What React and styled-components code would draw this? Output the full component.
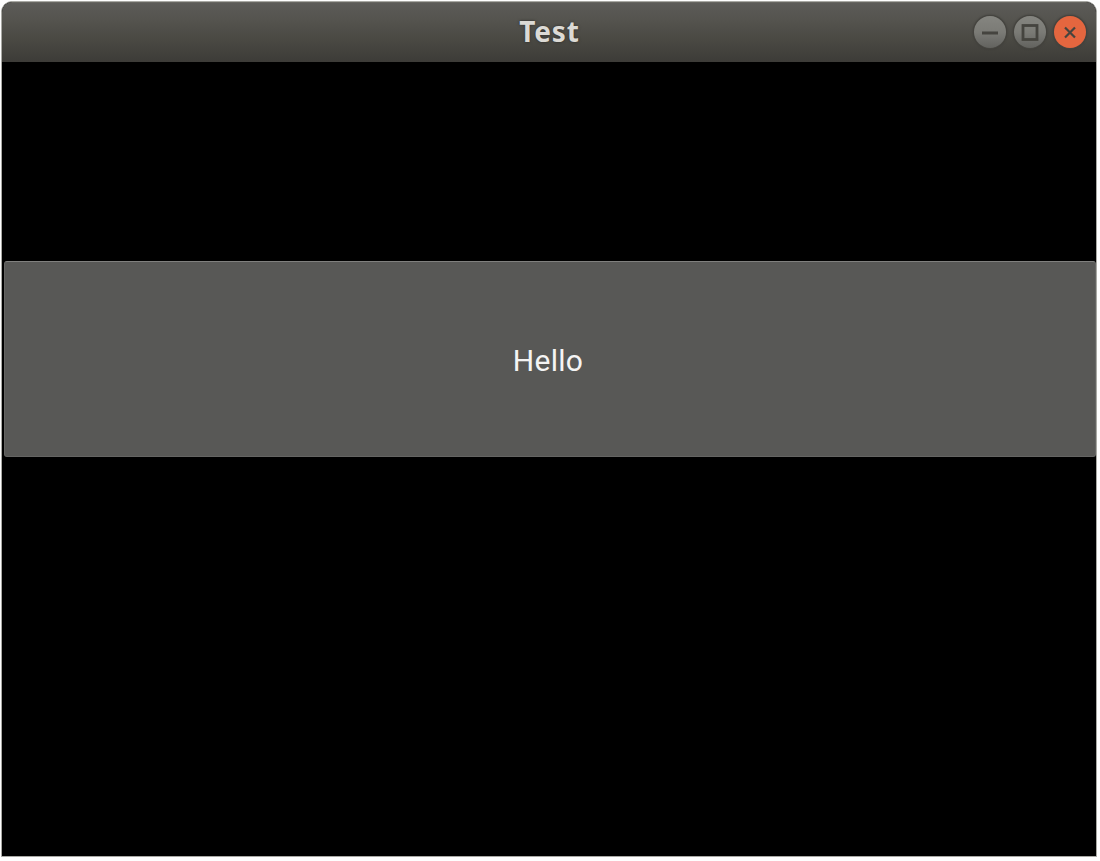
import React from "react";
import styled, { createGlobalStyle } from "styled-components";

const GlobalStyle = createGlobalStyle`
  * { box-sizing: border-box; }
  body { margin: 0; background: #fff; overflow: hidden; }
`;

const Desktop = styled.div`
  width: 1100px;
  height: 861px;
  padding: 1px 3px 4px 1px;
  background: #fefefe;
`;

const Window = styled.main`
  height: 856px;
  display: flex;
  flex-direction: column;
  border: 1px solid #a9a9a4;
  border-radius: 11px 11px 0 0;
  overflow: hidden;
  background: #000;
`;

const TitleBar = styled.header`
  flex: 0 0 60px;
  display: grid;
  grid-template-columns: 1fr auto 1fr;
  align-items: center;
  padding: 0 10px 2px 0;
  background: linear-gradient(#5c5b58 0, #55544f 16px, #494842 38px, #3c3b37 60px);
  border-top: 1px solid #666560;
`;

const Title = styled.h1`
  grid-column: 2;
  margin: 0 0 2px 11px;
  font: 700 28px/40px "Noto Sans", sans-serif;
  letter-spacing: 0.9px;
  color: #dcdad5;
  text-shadow: 0 0 3px #2c2b28;
`;

const Controls = styled.div`
  display: flex;
  justify-content: flex-end;
  gap: 8px;
`;

const ControlButton = styled.button`
  width: 32px;
  height: 32px;
  padding: 0;
  border: 0;
  border-radius: 50%;
  color: #45443f;
  background: ${(p) => (p.$close ? "#e4663f" : "linear-gradient(#858580, #7b7b76 50%, #62625e)")};
  box-shadow: 0 0 0 1px #464540, 0 0 2px 1px #3b3a36;

  svg { display: block; }
`;

const Content = styled.section`
  flex: 1;
  padding: 199px 0 0 2px;
`;

const HelloButton = styled.button`
  display: flex;
  align-items: center;
  justify-content: center;
  width: 100%;
  height: 196px;
  padding: 4px 4px 0 0;
  border: 1px solid #656563;
  border-top-color: #80807e;
  border-radius: 3px;
  background: #585856;
  color: #f4f4f4;
  font: 400 30px/40px Roboto, sans-serif;
  letter-spacing: 0.3px;
`;

const Glyph = ({ children }) => (
  <svg width="32" height="32" viewBox="0 0 32 32" fill="none" stroke="currentColor" strokeWidth="2">
    {children}
  </svg>
);

export default function App() {
  return (
    <>
      <GlobalStyle />
      <Desktop>
        <Window>
          <TitleBar>
            <Title>Test</Title>
            <Controls>
              <ControlButton aria-label="Minimize">
                <Glyph><path d="M8 17H24" strokeWidth="2.8" /></Glyph>
              </ControlButton>
              <ControlButton aria-label="Maximize">
                <Glyph><rect x="9" y="9.5" width="14" height="14" strokeWidth="2.8" /></Glyph>
              </ControlButton>
              <ControlButton aria-label="Close" $close>
                <Glyph><path d="M11 11.5L21 21.5M21 11.5L11 21.5" strokeWidth="2.2" /></Glyph>
              </ControlButton>
            </Controls>
          </TitleBar>
          <Content>
            <HelloButton>Hello</HelloButton>
          </Content>
        </Window>
      </Desktop>
    </>
  );
}
